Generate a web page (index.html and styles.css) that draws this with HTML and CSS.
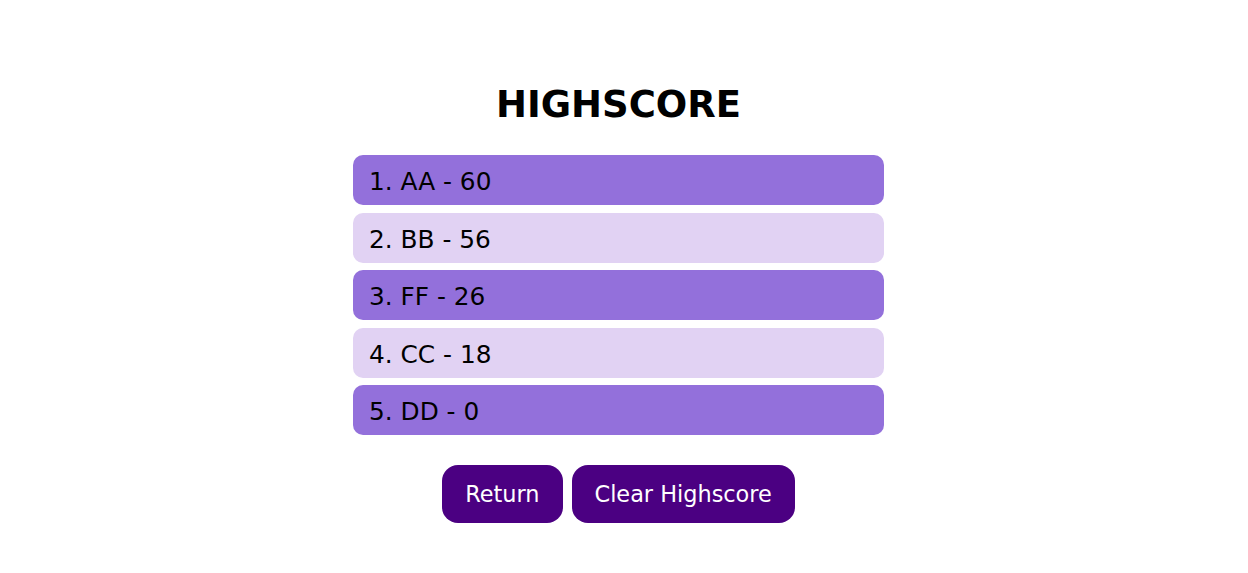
FILE: index.html
```html
<!DOCTYPE html>
<html>
<head>
<meta charset="utf-8">
<link rel="stylesheet" href="styles.css">
</head>
<body>
<main class="page">
  <h1 class="title">HIGHSCORE</h1>
  <ol class="scores">
    <li class="score score-dark">1. AA - 60</li>
    <li class="score score-light">2. BB - 56</li>
    <li class="score score-dark">3. FF - 26</li>
    <li class="score score-light">4. CC - 18</li>
    <li class="score score-dark">5. DD - 0</li>
  </ol>
  <div class="actions">
    <button class="btn">Return</button>
    <button class="btn">Clear Highscore</button>
  </div>
</main>
</body>
</html>
```
FILE: styles.css
```css
html, body {
  margin: 0;
  padding: 0;
  background: #fff;
}
body {
  font-family: "DejaVu Sans", Verdana, sans-serif;
  color: #000;
  padding-right: 11px;
}
.page {
  width: 531px;
  margin: 0 auto;
  display: flex;
  flex-direction: column;
  align-items: center;
}
.title {
  margin: 84px 0 29px;
  font-size: 37px;
  line-height: 42px;
  font-weight: bold;
}
.scores {
  list-style: none;
  margin: 0;
  padding: 0;
  width: 100%;
  display: flex;
  flex-direction: column;
  gap: 7.5px;
}
.score {
  height: 50px;
  box-sizing: border-box;
  padding: 3px 0 0 16px;
  display: flex;
  align-items: center;
  border-radius: 10px;
  font-size: 24.8px;
}
.score-dark { background: #9370db; }
.score-light { background: #e1d2f3; }
.actions {
  margin-top: 30px;
  display: flex;
  gap: 9px;
}
.btn {
  height: 58px;
  padding: 0 23px;
  border: none;
  border-radius: 16px;
  background: #4b0082;
  color: #fff;
  font-family: "DejaVu Sans", Verdana, sans-serif;
  font-size: 22.4px;
}
```
